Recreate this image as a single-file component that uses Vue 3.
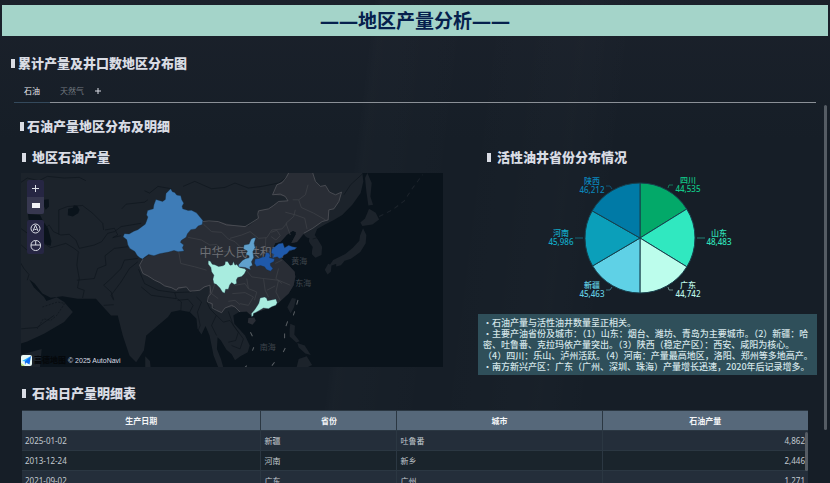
<script setup>
import { ref } from 'vue'

const activeTab = ref('石油')
const tabs = ['石油', '天然气']

const rows = [
  { date: '2025-01-02', province: '新疆', city: '吐鲁番', output: '4,862' },
  { date: '2013-12-24', province: '河南', city: '新乡', output: '2,446' },
  { date: '2021-09-02', province: '广东', city: '广州', output: '1,271' }
]

const wells = [
  { name: '四川', value: 44535, color: '#03a969', text: '#10c987', x: 210, y: 10, line: '190,15 191,12 195,12' },
  { name: '山东', value: 48483, color: '#30e8c0', text: '#30e0bb', x: 241, y: 63, line: '219,65 227,65' },
  { name: '广东', value: 44742, color: '#bcfdec', text: '#bcf5e8', x: 210, y: 115, line: '190,114 191,117 195,117' },
  { name: '新疆', value: 45463, color: '#5fd1e6', text: '#62cde2', x: 114, y: 115, line: '134,114 132,117 128,117' },
  { name: '河南', value: 45986, color: '#0b9fba', text: '#12a9c6', x: 83, y: 63, line: '97,65 105,65' },
  { name: '陕西', value: 46212, color: '#007aa6', text: '#0b86bb', x: 114, y: 11, line: '134,16 132,13 128,13' }
]

const total = wells.reduce((sum, w) => sum + w.value, 0)
const point = (share) => {
  const a = share * Math.PI * 2
  return `${162 + 55 * Math.sin(a)} ${65 - 55 * Math.cos(a)}`
}

let sum = 0
const slices = wells.map((w) => {
  const from = sum / total
  sum += w.value
  return { ...w, d: `M162 65L${point(from)}A55 55 0 0 1 ${point(sum / total)}Z` }
})
</script>

<template>
  <div class="page">
    <header class="banner">
      <h1>——地区产量分析——</h1>
    </header>

    <h2 class="title section-title">累计产量及井口数地区分布图</h2>

    <nav class="tabs">
      <button
        v-for="tab in tabs"
        :key="tab"
        class="tab"
        :class="{ active: tab === activeTab }"
        @click="activeTab = tab"
      >
        {{ tab }}
      </button>
      <button class="add" aria-label="+">
        <svg viewBox="0 0 8 8"><path d="M4 1v6M1 4h6" /></svg>
      </button>
    </nav>

    <main class="content">
      <h2 class="title sub-title">石油产量地区分布及明细</h2>

      <div class="panels">
        <section class="map-panel">
          <h3 class="title spaced">地区石油产量</h3>
          <div class="map">
            <svg class="map-canvas" viewBox="18 15 1266 579" preserveAspectRatio="xMidYMid slice">
              <path class="land" d="M18 15H1040L1043 40 1035 75 1010 110 980 140 955 155 930 168 905 182 898 200 908 215 920 235 918 260 900 268 888 256 892 236 880 220 882 210 866 205 845 222 828 224 842 197 834 188 815 200 798 220 780 225 775 238 800 240 845 237 815 255 797 268 820 290 838 310 840 325 835 350 820 375 790 402 760 418 720 432 708 440 695 428 675 428 655 440 658 465 690 500 704 530 698 550 676 562 660 574 650 556 634 542 618 515 608 505 606 540 618 570 625 595H610L596 560 584 500 572 472 560 497 548 480 545 450 525 430 495 425 470 430 460 445 430 470 395 500 388 545 365 580 345 560 325 500 310 440 290 440 262 410 245 390 190 390 145 383 110 387 85 375 62 345 46 333 60 357 90 385 97 397 128 386 150 400 176 430 150 460 90 495 40 518 18 525Z" />
              <path class="sea" d="M42 137 78 140 88 160 102 180 112 218 110 232 92 228 85 205 82 180 45 160ZM90 95l14-2 1 22-10 10-5-10zM162 122l14-3 3-8 10 2 7 12-4 10-16 10-15-4z" />
              <path class="land" d="M1055 15 1068 45 1064 85 1072 110 1058 112 1052 70 1048 30ZM1060 122l20 12 10 20-20 15-30 4-6-10 14-12zM1042 180l10 20-2 25-16 26-28 20-32 10-35 14 14-20 36-18 22-18 20-22 2-15zM938 286l10 4-2 20-10 8-8-14zM962 282l26-6-12 14-14 4zM830 388l12 2-6 26-10 18-10-18zM825 465l14 6-2 26 16 20-10 4-20-18 0-22zM846 522l22 8 18 28-16-4-20-18zM850 570l24-8 16 26-12 6h-34zM18 558l65-18-5 54H18zM392 562l14 14 2 18h-16z" />
              <g class="border">
                <path d="M20 180 55 205 75 222 60 240 45 250 22 230M18 280 30 300 45 318 40 335M22 480 70 476 85 465 120 440M18 45 40 30 75 38 100 25 150 30 195 28 215 38M134 198V125L160 115 205 112 235 135 265 165 268 185M92 182 105 170 118 190 140 200 165 198 185 215 195 240 240 230 262 220 280 195 300 190 320 175 380 165M92 226 110 238 155 225 180 240 195 252M192 252 188 290 195 330 190 358 210 365 205 388M188 335 240 330 250 300 275 290 272 262 300 240 340 235M298 392 290 370 268 350 290 330 320 300 330 275 370 270M268 410 298 408M370 280 345 300 320 340 290 380 298 395M372 302 390 345 430 365 480 372 485 390 410 380 380 355M480 372 530 370 545 362 580 352M488 390 500 400 498 430M488 395 520 392 535 410 525 430M545 385 560 400 548 430 556 470 548 490M322 122 335 108 390 102 400 95M272 185 300 180 310 200 295 208 320 202M576 400 585 420 604 440 590 470 605 500M605 440 625 460 645 455 670 490 662 515 640 520M640 428 655 470 685 510 675 540 650 530" />
                <path d="M505 55 540 40 590 62 630 58 660 45 700 60 740 55 790 45 830 18M892 212 915 205M985 80 1005 50 1040 18M470 62 430 55 405 75 390 68" />
              </g>
              <path class="inner" d="M85 415 130 400 152 404 128 440 110 455 88 450 70 480" />
              <path class="china" d="M564 160 610 160 660 172 700 174 730 150 730 128 760 122 790 100 818 98 810 85 772 80 785 50 810 35 820 15H892L900 40 915 55 930 52 942 72 960 80 978 72 970 100 955 122 940 125 938 155 920 160 892 180 865 195 845 222 828 224 842 197 834 188 815 200 798 220 780 225 775 238 797 268 820 290 838 310 840 325 835 350 820 375 790 402 760 418 720 432 708 440 695 428 675 430 660 415 630 418 620 432 605 425 585 405 580 385 585 350 555 365 525 368 515 355 485 365 450 352 420 335 385 315 375 290 385 272Z" />
              <path class="sea" d="M795 222 815 200 832 188 842 192 838 202 820 216 828 226 845 222 865 198 880 215 890 255 860 275 800 270 815 255 845 238 800 240 775 238 780 226Z" />
              <path class="china-line" d="M385 272 375 290 385 315 400 322 420 335 436 342 450 352 470 357 485 365 490 358 515 355 525 368 555 365 568 355 585 350 588 375 580 385 578 400 592 405 592 418 605 425 620 432 630 418 650 410 660 415 675 430M564 160 582 158 610 160 635 170 660 172 690 175 705 166 730 150 728 138 730 128 760 122 775 112 790 100 818 98 810 85 795 78 772 80 785 50 800 44 812 30 820 15M892 15 900 40 915 55 930 52 942 72 960 80 978 72 970 100 955 122 940 125 938 155 920 160 892 180 865 195" />
              <path class="province" d="M492 250 498 285 540 295 575 305M520 207 560 215 585 230 605 228 625 250 650 248M566 168 590 190 620 192 640 212 660 220 680 240M645 210 680 200 705 190 730 210 755 208 770 185 800 182 815 165M878 50 870 80 850 95 858 118 895 135 930 155M832 95 850 95M810 132 840 140 868 150 875 182M840 125 835 145 812 165 825 200M768 192 785 186 795 202 782 215 768 205M752 208 750 245 765 250M690 300 710 325 745 330 790 335 825 350M745 330 750 365 760 385M695 330 700 360 725 370 718 395M660 350 690 345 700 360M652 375 690 372 715 385 700 410 675 405M640 398 660 395 675 408M790 300 782 330 800 345M780 285 800 275M790 335 782 370 795 395M600 345 590 375 610 390M755 365 780 352" />
              <path class="china" d="M700 448l18-2 4 10-10 12-14-6z" />
              <g class="dash">
                <path d="M848 394l-4 14M838 428l-4 12M817 458l-5 14M808 494v14M810 537l-6 12M778 580l-8 10M706 490l6 12M716 535l-4 10M695 590l-6 6" />
                <path class="isles" d="M1090 145 1130 125 1165 98 1190 60 1220 20" />
              </g>
              <text class="country" x="554" y="266">中华人民共和国</text>
              <text class="sea-name" x="828" y="287">黄海</text>
              <text class="sea-name" x="840" y="352">东海</text>
              <text class="sea-name" x="734" y="542">南海</text>
              <g class="region">
                <path fill="#3e7cb7" d="M468 62 473 71 480 73 486 81 498 83 501 95 507 105 502 114 504 122 520 127 530 126 545 134 556 147 564 157 562 169 550 173 542 182 528 184 518 196 514 207 500 216 497 222 507 230 503 238 508 248 490 250 478 246 462 251 435 256 418 262 402 258 388 268 384 272 376 268 368 261 361 249 346 240 340 229 337 214 326 205 330 196 344 197 358 189 370 184 392 168 396 158 400 146 396 140 399 127 416 122 418 110 424 94 444 100 452 94 454 76Z" />
                <path fill="#a8ecdf" d="M580 277 586 278 592 287 600 289 611 294 624 292 630 288 631 279 638 279 645 290 652 289 655 279 660 290 664 287 674 297 690 301 693 306 688 316 680 324 668 327 664 334 665 345 658 348 650 342 644 349 640 362 632 362 629 374 622 370 615 358 604 347 597 345 594 332 597 320 590 310 588 297 580 287Z" />
                <path fill="#60a0cc" d="M722 208 717 225 720 238 713 250 716 267 709 280 712 290 704 295 706 304 690 297 670 295 671 288 682 276 692 270 702 268 702 262 692 258 697 248 685 241 687 230 702 227 708 213 714 209Z" />
                <path fill="#1f59aa" d="M720 272 731 270 742 266 749 265 752 252 760 253 765 260 763 268 778 271 776 279 765 285 766 292 773 300 766 308 754 303 748 295 736 291 724 294 718 284Z" />
                <path fill="#1f59aa" d="M770 242 780 234 790 226 803 224 808 238 820 231 832 235 845 237 838 243 822 247 815 256 806 260 800 268 792 270 786 265 772 269 776 258 768 254Z" />
                <path fill="#a8ecdf" d="M735 388 748 385 754 388 757 396 768 394 782 391 786 402 782 410 770 414 760 420 745 418 735 424 722 431 715 434 714 442 709 443 709 434 718 424 726 412 731 404Z" />
              </g>
            </svg>

            <div class="controls">
              <div class="control-group">
                <button aria-label="放大"><svg viewBox="0 0 17 17"><path d="M8.500 5v7M5 8.500h7" /></svg></button>
                <button class="lit" aria-label="缩小"><svg viewBox="0 0 17 17"><path class="solid" d="M5 6h8v5H5z" /></svg></button>
              </div>
              <div class="control-group">
                <button aria-label="指北"><svg viewBox="0 0 17 17"><circle cx="8.500" cy="8.500" r="4.500" /><path d="M6 11 8.500 5 11 11M7.500 9.500h2" /></svg></button>
                <button aria-label="鼠标"><svg viewBox="0 0 17 17"><rect x="4" y="3.500" width="9.500" height="10" rx="4.500" /><path d="M4 8h9.500M8.700 4v4" /></svg></button>
              </div>
            </div>

            <div class="copyright">
              <svg class="logo" viewBox="0 0 11 11">
                <rect width="11" height="11" rx="2" fill="#e9f8f4" />
                <path d="M0 8 4 11H2a2 2 0 0 1-2-2z" fill="#b6e36f" />
                <path d="M1 6 10 1 5 6.500z" fill="#29b4ff" />
                <path d="M10 1 8.500 9.500 5 7.500 4 10 3.800 6.500z" fill="#0f6df0" />
              </svg>
              <b>高德地图</b>
              <span>© 2025 AutoNavi</span>
            </div>
          </div>
        </section>

        <section class="pie-panel">
          <h3 class="title spaced">活性油井省份分布情况</h3>
          <svg class="pie" viewBox="0 0 339 141">
            <path v-for="s in slices" :key="s.name" class="slice" :d="s.d" :fill="s.color" />
            <g v-for="s in slices" :key="s.value" :fill="s.text">
              <polyline class="leader" :points="s.line" :stroke="s.text" />
              <text :x="s.x" :y="s.y">{{ s.name }}</text>
              <text :x="s.x" :y="s.y + 9">{{ s.value.toLocaleString('en-US') }}</text>
            </g>
          </svg>
          <div class="note">
            <p>・石油产量与活性油井数量呈正相关。</p>
            <p>・主要产油省份及城市：（1）山东：烟台、潍坊、青岛为主要城市。（2）新疆：哈密、吐鲁番、克拉玛依产量突出。（3）陕西（稳定产区）：西安、咸阳为核心。</p>
            <p>（4）四川：乐山、泸州活跃。（4）河南：产量最高地区，洛阳、郑州等多地高产。</p>
            <p>・南方新兴产区：广东（广州、深圳、珠海）产量增长迅速，2020年后记录增多。</p>
          </div>
        </section>
      </div>

      <section class="detail">
        <h3 class="title spaced">石油日产量明细表</h3>
        <div class="table-wrap">
          <table>
            <colgroup>
              <col class="col-date" />
              <col class="col-province" />
              <col class="col-city" />
              <col />
            </colgroup>
            <thead>
              <tr>
                <th>生产日期</th>
                <th>省份</th>
                <th>城市</th>
                <th>石油产量</th>
              </tr>
            </thead>
            <tbody>
              <tr v-for="row in rows" :key="row.date">
                <td>{{ row.date }}</td>
                <td>{{ row.province }}</td>
                <td>{{ row.city }}</td>
                <td class="num">{{ row.output }}</td>
              </tr>
            </tbody>
          </table>
          <span class="thumb table-thumb"></span>
        </div>
      </section>
      <span class="thumb page-thumb"></span>
    </main>
  </div>
</template>

<style>
body {
  margin: 0;
  background: #161e27;
}
</style>

<style scoped>
.page {
  box-sizing: border-box;
  height: 100vh;
  padding-top: 5px;
  overflow: hidden;
  display: flex;
  flex-direction: column;
  background:
    linear-gradient(97deg, transparent 42%, rgba(255, 255, 255, 0.01) 43%, transparent 54%, rgba(255, 255, 255, 0.01) 66%, transparent 72%),
    linear-gradient(#1b212b, #161e27 140px);
  color: #d9dce4;
  font-family: 'Noto Sans', 'Noto Sans CJK SC', sans-serif;
  font-size: 8px;
}

h1,
h2,
h3,
p {
  margin: 0;
}

button {
  padding: 0;
  border: 0;
  background: none;
  color: inherit;
  font: inherit;
}

.banner {
  flex: none;
  margin: 0 2px;
  padding-top: 2px;
  background: #a4d4c9;
  text-align: center;
}

.banner h1 {
  color: #06204d;
  font-size: 19px;
  font-weight: 700;
  line-height: 29px;
}

.title {
  display: flex;
  align-items: center;
  gap: 3px;
  font-family: 'Noto Sans CJK SC', sans-serif;
  font-size: 13px;
  font-weight: 900;
  line-height: 16px;
}

.title::before {
  content: '';
  width: 4px;
  height: 9px;
  background: #d9dce4;
}

.title.spaced {
  gap: 6px;
}

.section-title {
  margin: 19px 11px 0;
}

.tabs {
  flex: none;
  display: flex;
  margin: 8px 14px 0;
  border-bottom: 1px solid #8b9097;
}

.tab {
  height: 24px;
  margin-bottom: -1px;
  padding: 0 10px;
  border-bottom: 1px solid transparent;
  color: #737980;
}

.tab.active {
  border-color: #34495c;
  color: #e8eaee;
}

.add {
  width: 9px;
}

.add svg {
  display: block;
  width: 8px;
  height: 8px;
}

.add path {
  stroke: #d9dce4;
  fill: none;
}

.content {
  position: relative;
  flex: 1;
  min-height: 0;
  padding: 15px 13px 0 20px;
}

.panels {
  display: flex;
  gap: 35px;
  margin: 15px 0 0 1px;
}

.map-panel {
  flex: 422;
  min-width: 0;
}

.pie-panel {
  flex: 339;
  min-width: 0;
}

.map-panel .title {
  margin: 0 1px 8px;
}

.pie-panel .title {
  margin: 0 9px 8px;
}

.map {
  position: relative;
}

.map-canvas {
  display: block;
  width: 100%;
  height: 194px;
  background: #0a131b;
}

.land {
  fill: #1c232b;
}

.sea {
  fill: #0a131b;
}

.border,
.inner {
  fill: none;
  stroke: #0e151c;
  stroke-width: 2;
  stroke-linejoin: round;
}

.inner {
  stroke-dasharray: 6 4;
}

.china {
  fill: #292d35;
}

.china-line {
  fill: none;
  stroke: #5a5c61;
  stroke-width: 2;
}

.province {
  fill: none;
  stroke: #41444a;
  stroke-width: 2;
}

.dash {
  fill: none;
  stroke: #5a5f64;
  stroke-width: 3;
}

.isles {
  stroke: #1c232b;
  stroke-dasharray: 14 12;
}

.country {
  fill: #6d6f74;
  font-size: 36px;
}

.sea-name {
  fill: #3f454c;
  font-size: 24px;
}

.region path {
  stroke: #16293d;
  stroke-width: 1;
}

.controls {
  position: absolute;
  top: 7px;
  left: 6px;
  display: grid;
  gap: 6px;
}

.control-group {
  display: grid;
  border-radius: 2px;
  background: #262643;
  overflow: hidden;
}

.control-group button {
  width: 17px;
  height: 17px;
}

.control-group .lit {
  background: #373850;
}

.control-group svg {
  display: block;
  fill: none;
  stroke: #d9dce4;
}

.control-group .solid {
  fill: #f2f3f6;
  stroke: none;
}

.copyright {
  position: absolute;
  bottom: 1px;
  left: 0;
  display: flex;
  align-items: center;
  gap: 2px;
  font-family: 'Liberation Sans', 'Noto Sans CJK SC', sans-serif;
  font-size: 7px;
  line-height: 11px;
}

.copyright b {
  color: #05080b;
  font-size: 8px;
  font-weight: 900;
}

.logo {
  width: 11px;
  height: 11px;
}

.pie {
  display: block;
  width: 100%;
  height: 141px;
}

.pie text {
  font-size: 8px;
  font-weight: 500;
  text-anchor: middle;
}

.slice {
  stroke: #17404d;
  stroke-linejoin: round;
}

.leader {
  fill: none;
  opacity: 0.5;
}

.note {
  padding: 3px 1px 3px 5px;
  background: #2f4f5a;
  color: #d3e4e8;
  font-family: 'Noto Sans CJK SC', sans-serif;
  font-size: 9px;
  font-weight: 500;
  line-height: 11px;
}

.detail {
  margin: 10px 9px 0 2px;
}

.detail .title {
  margin-bottom: 9px;
}

.table-wrap {
  position: relative;
}

table {
  width: 100%;
  border-collapse: collapse;
  table-layout: fixed;
}

.col-date {
  width: 30.4%;
}

.col-province {
  width: 17.3%;
}

.col-city {
  width: 26.1%;
}

th,
td {
  box-sizing: border-box;
  height: 20px;
  padding: 0 3px;
  border: 1px solid #2b3742;
  text-align: left;
}

th {
  background: #56687a;
  color: #f4f6f8;
  text-align: center;
}

th:first-child,
td:first-child {
  border-left: 0;
}

th:last-child,
td:last-child {
  border-right: 0;
}

td {
  background: #242e3a;
  color: #c3cad0;
}

tr:nth-child(even) td {
  background: #1a242c;
}

.num {
  text-align: right;
}

.thumb {
  position: absolute;
  width: 3px;
  border-radius: 2px;
  background: #555c64;
}

.table-thumb {
  top: 22px;
  right: 0;
  height: 39px;
}

.page-thumb {
  top: 2px;
  right: 3px;
  bottom: 53px;
}
</style>
